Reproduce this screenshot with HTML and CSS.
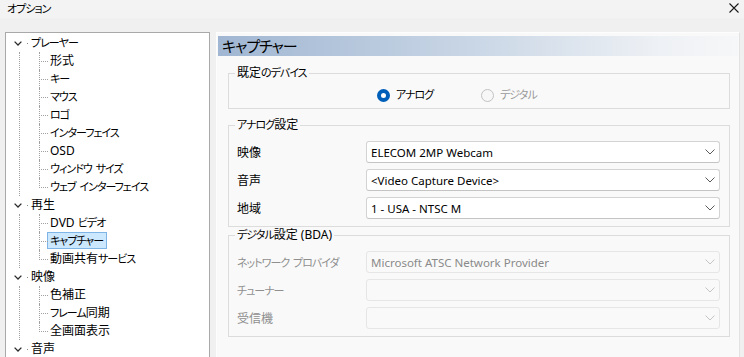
FILE: index.html
```html
<!DOCTYPE html>
<html lang="ja">
<head>
<meta charset="utf-8">
<title>オプション</title>
<link rel="stylesheet" href="styles.css">
</head>
<body>
<div class="titlebar">
  <span class="title k">オプション</span>
  <svg class="close" width="10" height="10" viewBox="0 0 10 10"><path d="M0.5 0.5 L9.5 9.5 M9.5 0.5 L0.5 9.5" stroke="#1a1a1a" stroke-width="1.1" fill="none"/></svg>
</div>
<div class="main">
  <div class="tree">
    <div class="node"><svg class="chev" width="8" height="5" viewBox="0 0 8 5"><path d="M0.6 0.6 L4 4 L7.4 0.6" stroke="#2b2b2b" stroke-width="1.3" fill="none"/></svg><span class="dot"></span><span class="k">プレーヤー</span></div>
    <div class="children">
      <div class="leaf"><span>形式</span></div>
      <div class="leaf"><span class="k">キー</span></div>
      <div class="leaf"><span class="k">マウス</span></div>
      <div class="leaf"><span class="k">ロゴ</span></div>
      <div class="leaf"><span class="k">インターフェイス</span></div>
      <div class="leaf"><span>OSD</span></div>
      <div class="leaf"><span class="k">ウィンドウ サイズ</span></div>
      <div class="leaf last"><span class="k">ウェブ インターフェイス</span></div>
    </div>
    <div class="node"><svg class="chev" width="8" height="5" viewBox="0 0 8 5"><path d="M0.6 0.6 L4 4 L7.4 0.6" stroke="#2b2b2b" stroke-width="1.3" fill="none"/></svg><span class="dot"></span><span>再生</span></div>
    <div class="children">
      <div class="leaf"><span>DVD <span class="k">ビデオ</span></span></div>
      <div class="leaf"><span class="sel k">キャプチャー</span></div>
      <div class="leaf last"><span>動画共有<span class="k">サービス</span></span></div>
    </div>
    <div class="node"><svg class="chev" width="8" height="5" viewBox="0 0 8 5"><path d="M0.6 0.6 L4 4 L7.4 0.6" stroke="#2b2b2b" stroke-width="1.3" fill="none"/></svg><span class="dot"></span><span>映像</span></div>
    <div class="children">
      <div class="leaf"><span>色補正</span></div>
      <div class="leaf"><span><span class="k">フレーム</span>同期</span></div>
      <div class="leaf last"><span>全画面表示</span></div>
    </div>
    <div class="node"><svg class="chev" width="8" height="5" viewBox="0 0 8 5"><path d="M0.6 0.6 L4 4 L7.4 0.6" stroke="#2b2b2b" stroke-width="1.3" fill="none"/></svg><span class="dot"></span><span>音声</span></div>
  </div>
  <div class="panel">
    <div class="header">キャプチャー</div>
    <fieldset class="grp grp-device">
      <legend>既定<span class="k">のデバイス</span></legend>
      <div class="radios">
        <div class="radio radio-first"><span class="rcircle on"></span><span class="k">アナログ</span></div>
        <div class="radio disabled"><span class="rcircle"></span><span class="k">デジタル</span></div>
      </div>
    </fieldset>
    <fieldset class="grp grp-analog">
      <legend><span class="k">アナログ</span>設定</legend>
      <div class="form">
        <span class="lbl">映像</span>
        <div class="combo"><span>ELECOM 2MP Webcam</span><svg class="cchev" width="10" height="6" viewBox="0 0 10 6"><path d="M0.5 0.5 L5 5 L9.5 0.5" stroke="#5a5a5a" stroke-width="1" fill="none"/></svg></div>
        <span class="lbl">音声</span>
        <div class="combo"><span>&lt;Video Capture Device&gt;</span><svg class="cchev" width="10" height="6" viewBox="0 0 10 6"><path d="M0.5 0.5 L5 5 L9.5 0.5" stroke="#5a5a5a" stroke-width="1" fill="none"/></svg></div>
        <span class="lbl">地域</span>
        <div class="combo"><span>1 - USA - NTSC M</span><svg class="cchev" width="10" height="6" viewBox="0 0 10 6"><path d="M0.5 0.5 L5 5 L9.5 0.5" stroke="#5a5a5a" stroke-width="1" fill="none"/></svg></div>
      </div>
    </fieldset>
    <fieldset class="grp grp-digital">
      <legend><span class="k">デジタル</span>設定 (BDA)</legend>
      <div class="form">
        <span class="lbl off k">ネットワーク プロバイダ</span>
        <div class="combo off"><span>Microsoft ATSC Network Provider</span><svg class="cchev" width="10" height="6" viewBox="0 0 10 6"><path d="M0.5 0.5 L5 5 L9.5 0.5" stroke="#c4c4c4" stroke-width="1" fill="none"/></svg></div>
        <span class="lbl off k">チューナー</span>
        <div class="combo off"><span></span><svg class="cchev" width="10" height="6" viewBox="0 0 10 6"><path d="M0.5 0.5 L5 5 L9.5 0.5" stroke="#c4c4c4" stroke-width="1" fill="none"/></svg></div>
        <span class="lbl off">受信機</span>
        <div class="combo off"><span></span><svg class="cchev" width="10" height="6" viewBox="0 0 10 6"><path d="M0.5 0.5 L5 5 L9.5 0.5" stroke="#c4c4c4" stroke-width="1" fill="none"/></svg></div>
      </div>
    </fieldset>
  </div>
</div>
</body>
</html>
```

FILE: styles.css
```css
* { box-sizing: border-box; }
html, body {
  margin: 0;
  padding: 0;
  width: 744px;
  height: 357px;
  overflow: hidden;
  background: #f0f0f0;
  color: #000;
  font-family: "Noto Sans", "Noto Sans CJK JP", sans-serif;
  font-size: 12px;
  font-feature-settings: "palt";
}

/* narrower kana runs (Meiryo UI style) */
.k {
  font-size: 11px;
  letter-spacing: -1px;
  word-spacing: 2px;
}

.titlebar {
  height: 18px;
  display: flex;
  align-items: center;
  justify-content: space-between;
  padding: 0 5px 0 7px;
  background: #f3f3f3;
}
.title { line-height: 16px; }
.close { display: block; margin-top: -2px; }

.main {
  display: flex;
  gap: 6px;
  padding: 14px 4px 0 5px;
  height: 400px;
}

.tree {
  width: 205px;
  flex: none;
  background: #fff;
  border: 1px solid #a9a9a9;
  border-bottom: none;
  padding-top: 1px;
}

.node {
  height: 18px;
  display: flex;
  align-items: center;
  padding-left: 8px;
  line-height: 18px;
}
.chev { display: block; flex: none; }
.dot {
  width: 1px;
  height: 1px;
  background: #8a8a8a;
  margin: 1px 3px 0 5px;
  flex: none;
}

.children {
  margin-left: 13px;
  border-left: 1px dotted #a0a0a0;
}
.leaf {
  position: relative;
  height: 18px;
  line-height: 18px;
  padding-left: 30px;
  white-space: nowrap;
}
.leaf::before {
  content: "";
  position: absolute;
  left: 19px;
  top: 0;
  width: 8px;
  height: 9px;
  border-left: 1px dotted #a0a0a0;
  border-bottom: 1px dotted #a0a0a0;
}
.leaf:not(.last)::after {
  content: "";
  position: absolute;
  left: 19px;
  top: 9px;
  bottom: 0;
  border-left: 1px dotted #a0a0a0;
}
.sel {
  display: inline-block;
  margin-left: -3px;
  padding: 0 3px 0 2px;
  line-height: 15px;
  border: 1px solid #7fb4e6;
  background: #cce8ff;
  vertical-align: top;
}

.panel {
  flex: 1;
  background: #f9f9f9;
  border: 1px solid #fdfdfd;
  border-right-color: #e2e2e2;
  padding: 3px 1px 0 1px;
}

.header {
  height: 20px;
  line-height: 20px;
  padding-left: 4px;
  font-size: 15px;
  letter-spacing: -1px;
  background: linear-gradient(to right, #a0b6d2 0%, #cad7e6 50%, #eef1f5 85%, #f6f7f8 100%);
}

.grp {
  margin: 0 8px 0 10px;
  border: 1px solid #dcdcdc;
  padding: 8px 9px 7px 6px;
  min-width: 0;
}
.grp legend {
  padding: 0 2px;
  line-height: 16px;
}
.grp-device {
  margin-top: 9px;
  padding-top: 6px;
  padding-bottom: 5px;
}
.grp-analog { margin-top: 8px; }
.grp-digital { margin-top: 0; }

.radios {
  display: flex;
  padding-left: 142px;
  height: 16px;
  align-items: center;
}
.radio {
  display: flex;
  align-items: center;
  gap: 6px;
  line-height: 16px;
}
.radio-first { width: 104px; }
.rcircle {
  width: 13px;
  height: 13px;
  border-radius: 50%;
  border: 1px solid #a8a8a8;
  background: #f7f7f7;
  flex: none;
}
.rcircle.on {
  border: 4px solid #005fb8;
  background: #fff;
}
.radio.disabled { color: #9a9a9a; }
.radio.disabled .rcircle { border-color: #c2c2c2; }

.form {
  display: grid;
  grid-template-columns: 131px 1fr;
  row-gap: 6px;
  align-items: center;
}
.lbl {
  padding-left: 2px;
  white-space: nowrap;
}
.lbl.off { color: #8f8f8f; }

.combo {
  height: 22px;
  display: flex;
  align-items: center;
  justify-content: space-between;
  padding: 0 4px 0 4px;
  background: #fff;
  border: 1px solid #d3d3d3;
  border-bottom-color: #c4c4c4;
  border-radius: 3px;
  font-size: 11.5px;
  white-space: nowrap;
}
.combo.off {
  background: #f9f9f9;
  border-color: #e6e6e6;
  color: #8a8a8a;
}
.cchev { display: block; flex: none; }
```
